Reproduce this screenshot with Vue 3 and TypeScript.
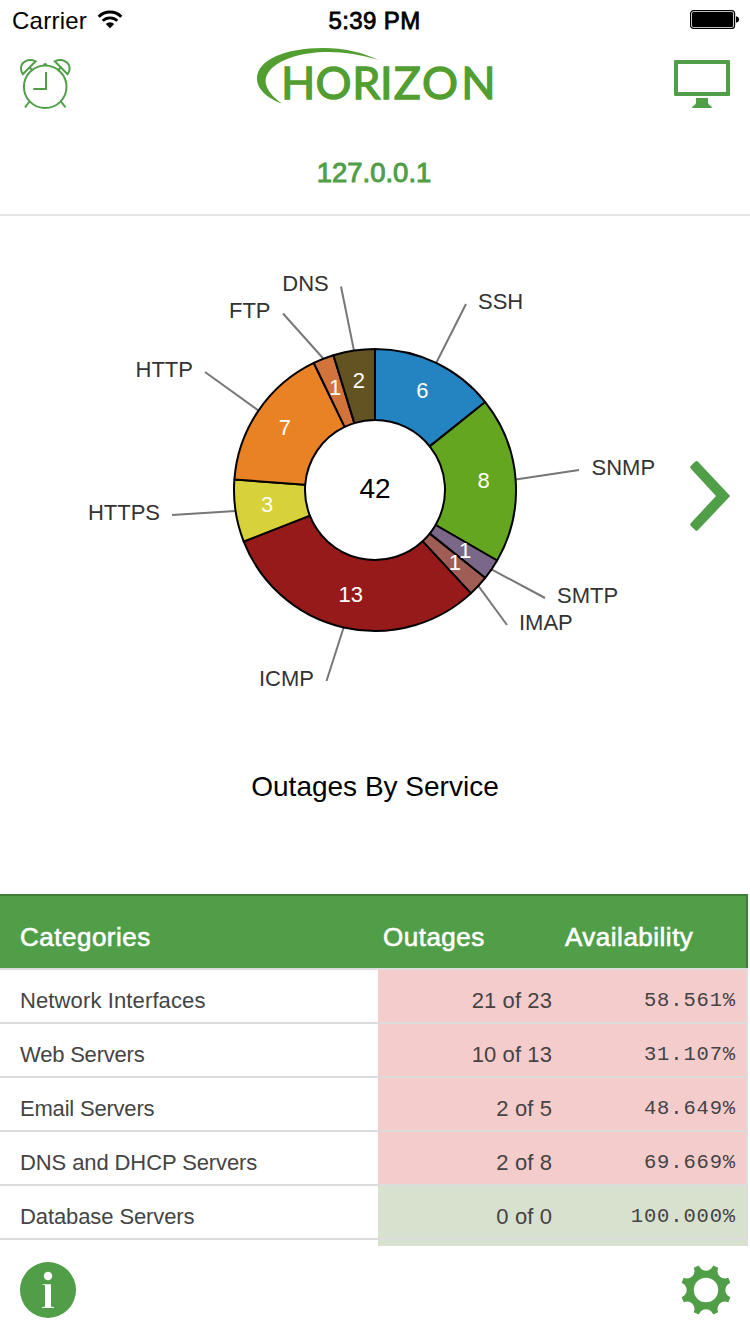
<script setup lang="ts">
interface Service {
  name: string
  count: number
  color: string
  labelX: number
  labelY: number
  anchor: 'start' | 'end'
  tipX: number
  tipY: number
}

interface Category {
  name: string
  outages: string
  availability: string
  tracking: number
  ok?: boolean
}

const services: Service[] = [
  { name: 'SSH', count: 6, color: '#2484c1', labelX: 478, labelY: 309, anchor: 'start', tipX: 466, tipY: 304 },
  { name: 'SNMP', count: 8, color: '#65a620', labelX: 591.5, labelY: 475, anchor: 'start', tipX: 579, tipY: 470 },
  { name: 'SMTP', count: 1, color: '#7b6888', labelX: 557, labelY: 603, anchor: 'start', tipX: 545, tipY: 598 },
  { name: 'IMAP', count: 1, color: '#a05d56', labelX: 519, labelY: 630, anchor: 'start', tipX: 507, tipY: 625 },
  { name: 'ICMP', count: 13, color: '#961a1a', labelX: 314, labelY: 686, anchor: 'end', tipX: 326.5, tipY: 681 },
  { name: 'HTTPS', count: 3, color: '#d8d23a', labelX: 160, labelY: 520, anchor: 'end', tipX: 172, tipY: 515 },
  { name: 'HTTP', count: 7, color: '#e98125', labelX: 193, labelY: 377, anchor: 'end', tipX: 205, tipY: 372 },
  { name: 'FTP', count: 1, color: '#d0743c', labelX: 270.5, labelY: 318, anchor: 'end', tipX: 283, tipY: 313.5 },
  { name: 'DNS', count: 2, color: '#635222', labelX: 328.8, labelY: 291, anchor: 'end', tipX: 341, tipY: 286.5 },
]

const CX = 375
const CY = 490
const OUTER = 141
const INNER = 70
const total = services.reduce((sum, s) => sum + s.count, 0)

function polar(radius: number, turn: number) {
  const a = turn * Math.PI * 2
  return { x: CX + radius * Math.sin(a), y: CY - radius * Math.cos(a) }
}

let running = 0
const slices = services.map((s) => {
  const start = running / total
  running += s.count
  const end = running / total
  const mid = (start + end) / 2
  const a = polar(OUTER, start)
  const b = polar(OUTER, end)
  const c = polar(INNER, end)
  const d = polar(INNER, start)
  return {
    ...s,
    path: `M${a.x} ${a.y}A${OUTER} ${OUTER} 0 0 1 ${b.x} ${b.y}L${c.x} ${c.y}A${INNER} ${INNER} 0 0 0 ${d.x} ${d.y}Z`,
    edge: polar(OUTER, mid),
    value: polar(109, mid),
  }
})

const categories: Category[] = [
  { name: 'Network Interfaces', outages: '21 of 23', availability: '58.561%', tracking: 0.12 },
  { name: 'Web Servers', outages: '10 of 13', availability: '31.107%', tracking: -0.2 },
  { name: 'Email Servers', outages: '2 of 5', availability: '48.649%', tracking: -0.2 },
  { name: 'DNS and DHCP Servers', outages: '2 of 8', availability: '69.669%', tracking: -0.1 },
  { name: 'Database Servers', outages: '0 of 0', availability: '100.000%', tracking: -0.1, ok: true },
]

const teeth = [22.5, 67.5, 112.5, 157.5, 202.5, 247.5, 292.5, 337.5]
const notches = [0, 45, 90, 135, 180, 225, 270, 315]
</script>

<template>
  <main class="screen">
    <div class="status">
      <div class="carrier">
        <span>Carrier</span>
        <svg width="26" height="20" viewBox="0 0 26 20" fill="none" stroke="#000">
          <path d="M1.7 6.7A16 16 0 0 1 24.3 6.7" stroke-width="3" />
          <path d="M5.7 10.8A10.4 10.4 0 0 1 20.3 10.8" stroke-width="2.8" />
          <path d="M8.8 14A6 6 0 0 1 17.2 14L13 18.3Z" fill="#000" stroke="none" />
        </svg>
      </div>
      <div class="time">5:39 PM</div>
      <svg class="battery" width="50" height="20" viewBox="0 0 50 20">
        <rect x="0.6" y="0.6" width="44" height="17.8" rx="3" fill="none" stroke="#000" stroke-width="1.2" />
        <rect x="2" y="2" width="41.2" height="15" rx="1.6" />
        <path d="M46 6.3Q49 6.8 49 9.5Q49 12.2 46 12.7Z" />
      </svg>
    </div>

    <header class="brand">
      <svg width="54" height="54" viewBox="18 56 54 54" fill="none" stroke="#519e49" stroke-width="2">
        <circle cx="45.2" cy="86.8" r="21.3" />
        <path d="M46 72V89H33.3M29.5 101.5L25 107.3M61 101.5L65.5 107.3" />
        <path d="M42.8 65.4Q43.3 63 45.2 63Q47.1 63 47.6 65.4Z" fill="#519e49" stroke="none" />
        <path d="M35.6 61.3C28 58 20.5 62 21 69Q21.2 72 22.8 74.2ZM30.2 68L32.8 70.8M54.8 61.3C62.4 58 69.9 62 69.6 69Q69.4 72 67.6 74.2ZM60.2 68L57.6 70.8" />
      </svg>
      <svg class="logo" width="240" height="60" viewBox="256 46 240 60">
        <path
          d="M282 103.6C269 99 257 90 257 78.5C257 60 285 48 323 48C344 48 363 52.5 378 59.8C360 54 342 51.5 324 52C291 53 266 65.5 265.6 81C265.6 89 273 97.5 282 103.6Z"
          fill="#529e31"
        />
        <text class="logo-text" text-anchor="middle" y="99.3" x="298.2 333.5 366.3 386.3 407.2 440 478.4">HORIZON</text>
      </svg>
      <svg width="58" height="50" viewBox="673 59 58 50" fill="#519e49">
        <path
          fill-rule="evenodd"
          d="M675.2 60H728.8Q730 60 730 61.2V94.8Q730 96 728.8 96H675.2Q674 96 674 94.8V61.2Q674 60 675.2 60ZM678 64V92H726V64Z"
        />
        <path d="M696 98H708V103Q708.6 105 711.7 106.5V108H692.3V106.5Q695.4 105 696 103Z" />
      </svg>
    </header>

    <div class="host">127.0.0.1</div>

    <section class="chart">
      <svg width="750" height="678" viewBox="0 216 750 678">
        <g v-for="s in slices" :key="s.name">
          <line :x1="s.edge.x" :y1="s.edge.y" :x2="s.tipX" :y2="s.tipY" stroke="#777" stroke-width="2" />
          <text :x="s.labelX" :y="s.labelY" :text-anchor="s.anchor" class="label">{{ s.name }}</text>
        </g>
        <path
          v-for="s in slices"
          :key="s.name"
          :d="s.path"
          :fill="s.color"
          stroke="#000"
          stroke-width="2"
          stroke-linejoin="round"
        />
        <text
          v-for="s in slices"
          :key="s.name"
          :x="s.value.x"
          :y="s.value.y + 6.2"
          text-anchor="middle"
          class="value"
        >{{ s.count }}</text>
        <text x="375" y="498" text-anchor="middle" class="heading">{{ total }}</text>
        <text x="375" y="796" text-anchor="middle" class="heading">Outages By Service</text>
        <path
          d="M690.7 466L695.3 461.4Q696.5 460.4 697.8 461.4L730.2 496L697.8 530.3Q696.5 531.4 695.3 530.3L690.7 525.8Q689.6 524.6 690.7 523.3L716 496L690.7 468.4Q689.6 467.2 690.7 466Z"
          fill="#519e49"
        />
      </svg>
    </section>

    <section class="table">
      <div class="row head">
        <span class="name">Categories</span>
        <span class="outages">Outages</span>
        <span class="avail">Availability</span>
      </div>
      <div v-for="c in categories" :key="c.name" class="row" :class="{ ok: c.ok }">
        <span class="name" :style="{ letterSpacing: `${c.tracking}px` }">{{ c.name }}</span>
        <div class="stats">
          <span class="outages">{{ c.outages }}</span>
          <span class="avail">{{ c.availability }}</span>
        </div>
      </div>
      <div class="row ok"><span class="name"></span><div class="stats"></div></div>
    </section>

    <footer class="toolbar">
      <svg width="56" height="56" viewBox="0 0 56 56">
        <circle cx="28" cy="28" r="28" fill="#519e49" />
        <circle cx="28" cy="14" r="4.2" fill="#fff" />
        <path d="M22.3 22.2H31V44.2Q31 45 34 45.3V46H22V45.3Q25 45 25 44.2V23.7Q25 23 22.3 22.8Z" fill="#fff" />
      </svg>
      <svg width="48" height="50" viewBox="-24 -25 48 50">
        <defs>
          <mask id="gear-cut">
            <rect x="-26" y="-26" width="52" height="52" fill="#fff" />
            <circle r="12.2" fill="#000" />
            <circle v-for="n in notches" :key="n" cy="-26.8" r="7.5" :transform="`rotate(${n})`" fill="#000" />
          </mask>
        </defs>
        <g mask="url(#gear-cut)" fill="#519e49">
          <circle r="23" />
          <path v-for="t in teeth" :key="t" d="M-6 -20L-3.4 -25.3L3.4 -25.3L6 -20Z" :transform="`rotate(${t})`" />
        </g>
      </svg>
    </footer>
  </main>
</template>

<style>
body {
  margin: 0;
  background: #fff;
}
</style>

<style scoped>
.screen {
  width: 750px;
  height: 1334px;
  overflow: hidden;
  display: flex;
  flex-direction: column;
  background: #fff;
  font-family: "Liberation Sans", Arial, sans-serif;
}
.screen svg {
  display: block;
  flex: none;
  overflow: visible;
}
.status {
  height: 40px;
  box-sizing: border-box;
  padding: 0 10px 0 12px;
  display: grid;
  grid-template-columns: 1fr auto 1fr;
  align-items: center;
  font-size: 24px;
  line-height: 40px;
}
.carrier {
  display: flex;
  align-items: center;
  gap: 10px;
  letter-spacing: 0.25px;
}
.carrier span,
.time {
  padding-top: 2px;
  line-height: 38px;
}
.time {
  padding-right: 3px;
  letter-spacing: 0.4px;
  -webkit-text-stroke: 0.8px #000;
}
.battery {
  justify-self: end;
}
.brand {
  height: 78px;
  box-sizing: border-box;
  padding: 6px 19px 0 18px;
  display: flex;
  justify-content: space-between;
  align-items: flex-start;
}
.brand > :first-child {
  margin-top: 10px;
}
.brand > :last-child {
  margin-top: 13px;
}
.logo {
  margin: 0 -3px 0 3px;
}
.logo-text {
  font: 400 45px Lato, sans-serif;
  fill: #529e31;
  stroke: #529e31;
  stroke-width: 1.3px;
}
.host {
  height: 98px;
  box-sizing: border-box;
  border-bottom: 2px solid #e6e6e6;
  padding: 38px 2px 0 0;
  text-align: center;
  font-size: 27.5px;
  line-height: 34px;
  color: #519e49;
  -webkit-text-stroke: 1px #519e49;
}
.chart {
  height: 678px;
}
.label {
  font-size: 22px;
  fill: #333;
}
.value {
  font-size: 22px;
  fill: #fff;
}
.heading {
  font-size: 28px;
  fill: #000;
}
.table {
  width: 748px;
  height: 352px;
  overflow: hidden;
  color: #444;
  font-size: 22px;
}
.row {
  height: 54px;
  box-sizing: border-box;
  display: flex;
  border-bottom: 2px solid #dcdcdc;
  border-right: 2px solid #dcdcdc;
}
.name {
  width: 378px;
  box-sizing: border-box;
  padding-left: 20px;
  line-height: 61px;
}
.stats {
  flex: 1;
  display: flex;
  background: #f5cccc;
}
.ok .stats {
  background: #d8e0ce;
}
.stats .outages {
  width: 174px;
  text-align: right;
  letter-spacing: 0.1px;
  line-height: 61px;
}
.stats .avail {
  flex: 1;
  padding-right: 10px;
  text-align: right;
  font-family: "Liberation Mono", monospace;
  font-size: 20.5px;
  letter-spacing: 0.85px;
  line-height: 61px;
}
.head {
  height: 76px;
  background: #519e49;
  border-top: 2px solid #407c3a;
  background-clip: padding-box;
  box-shadow: inset -2px 0 #407c3a;
  border-right: 0;
  color: #fff;
  font-size: 26px;
  letter-spacing: 0.5px;
  -webkit-text-stroke: 0.6px #fff;
}
.head span {
  line-height: 82px;
}
.head .outages {
  width: 182px;
  box-sizing: border-box;
  padding-left: 5px;
}
.head .avail {
  padding-left: 5px;
}
.toolbar {
  flex: 1;
  box-sizing: border-box;
  padding: 16px 20px;
  display: flex;
  align-items: flex-start;
  justify-content: space-between;
}
.toolbar > :last-child {
  margin-top: 3px;
}
</style>
